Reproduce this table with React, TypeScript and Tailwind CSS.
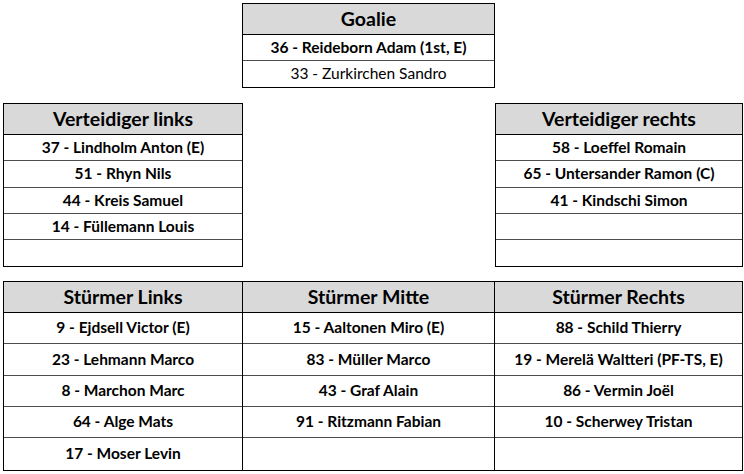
import React from "react";

type Row = { text: string; bold?: boolean };

const font = { fontFamily: "Lato, 'Open Sans', sans-serif" };

const Cell: React.FC<{ row?: Row; h: string; last?: boolean }> = ({ row, h, last }) => (
  <div
    className={`${h} flex items-center justify-center text-[15.5px] text-black leading-none ${
      last ? "" : "border-b border-[#4d4d4d]"
    } ${row?.bold === false ? "font-normal" : "font-bold"}`}
  >
    {row?.text ?? ""}
  </div>
);

const Header: React.FC<{ title: string }> = ({ title }) => (
  <div className="h-[31px] flex items-center justify-center bg-[#d9d9d9] border-b border-black text-[19.5px] font-bold text-black leading-none">
    {title}
  </div>
);

const Block: React.FC<{ title: string; rows: Row[]; heights: string[]; w: string }> = ({
  title,
  rows,
  heights,
  w,
}) => (
  <div className={`${w} border border-black bg-white`}>
    <Header title={title} />
    {heights.map((h, i) => (
      <Cell key={i} row={rows[i]} h={h} last={i === heights.length - 1} />
    ))}
  </div>
);

const goalie: Row[] = [
  { text: "36 - Reideborn Adam (1st, E)" },
  { text: "33 - Zurkirchen Sandro", bold: false },
];

const defLeft: Row[] = [
  { text: "37 - Lindholm Anton (E)" },
  { text: "51 - Rhyn Nils" },
  { text: "44 - Kreis Samuel" },
  { text: "14 - Füllemann Louis" },
];

const defRight: Row[] = [
  { text: "58 - Loeffel Romain" },
  { text: "65 - Untersander Ramon (C)" },
  { text: "41 - Kindschi Simon" },
];

const defHeights = ["h-[26px]", "h-[27px]", "h-[26px]", "h-[26px]", "h-[26px]"];
const fwdHeights = ["h-[31px]", "h-[32px]", "h-[31px]", "h-[31px]", "h-[32px]"];

const forwards: { title: string; w: string; rows: Row[] }[] = [
  {
    title: "Stürmer Links",
    w: "w-[239px] border-r border-black",
    rows: [
      { text: "9 - Ejdsell Victor (E)" },
      { text: "23 - Lehmann Marco" },
      { text: "8 - Marchon Marc" },
      { text: "64 - Alge Mats" },
      { text: "17 - Moser Levin" },
    ],
  },
  {
    title: "Stürmer Mitte",
    w: "w-[252px] border-r border-black",
    rows: [
      { text: "15 - Aaltonen Miro (E)" },
      { text: "83 - Müller Marco" },
      { text: "43 - Graf Alain" },
      { text: "91 - Ritzmann Fabian" },
    ],
  },
  {
    title: "Stürmer Rechts",
    w: "flex-1",
    rows: [
      { text: "88 - Schild Thierry" },
      { text: "19 - Merelä Waltteri (PF-TS, E)" },
      { text: "86 - Vermin Joël" },
      { text: "10 - Scherwey Tristan" },
    ],
  },
];

export default function App() {
  return (
    <div className="w-[744px] h-[474px] bg-white pl-[3px] pt-[3px]" style={font}>
      <div className="w-[740px] flex flex-col">
        <div className="ml-[239px]">
          <Block title="Goalie" rows={goalie} heights={["h-[26px]", "h-[26px]"]} w="w-[253px]" />
        </div>

        <div className="mt-[15px] flex justify-between">
          <Block title="Verteidiger links" rows={defLeft} heights={defHeights} w="w-[240px]" />
          <Block title="Verteidiger rechts" rows={defRight} heights={defHeights} w="w-[248px]" />
        </div>

        <div className="mt-[14px] flex border border-black">
          {forwards.map((col) => (
            <div key={col.title} className={col.w}>
              <Header title={col.title} />
              {fwdHeights.map((h, i) => (
                <Cell key={i} row={col.rows[i]} h={h} last={i === fwdHeights.length - 1} />
              ))}
            </div>
          ))}
        </div>
      </div>
    </div>
  );
}
